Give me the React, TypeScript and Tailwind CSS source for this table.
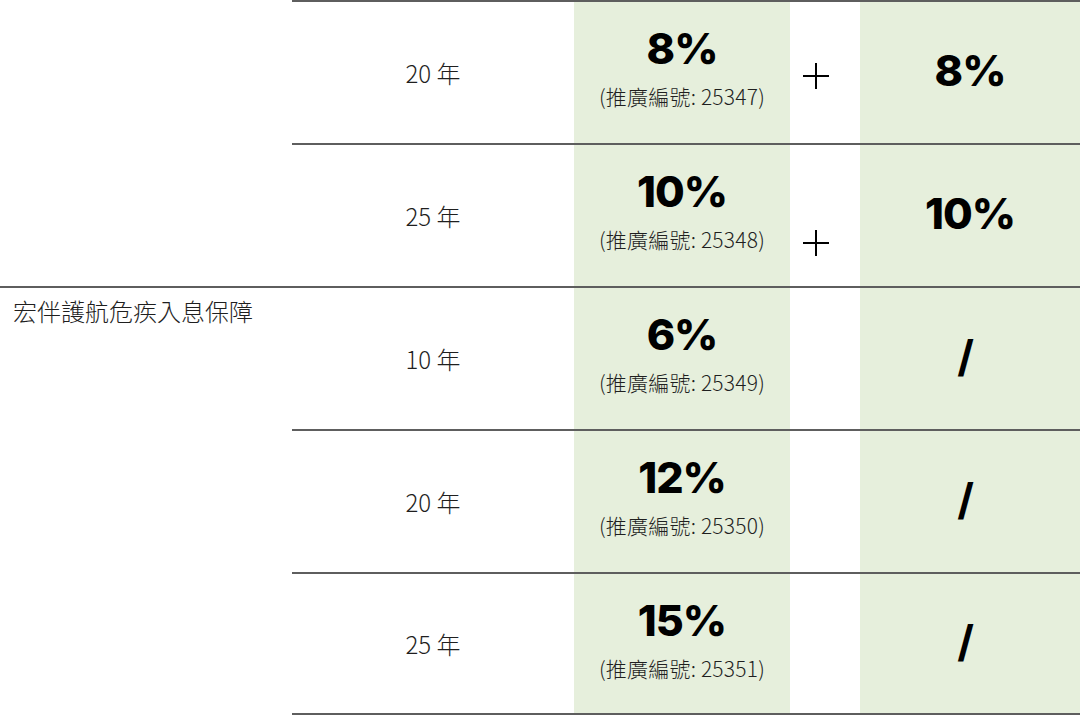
const sans = "font-['Noto_Sans_CJK_TC','Noto_Sans',sans-serif]";

type Row = {
  term: string;
  rate: string;
  code: string;
  plus: "center" | "low" | null;
  extra: string;
};

const rows: Row[] = [
  { term: "20 年", rate: "8%", code: "25347", plus: "center", extra: "8%" },
  { term: "25 年", rate: "10%", code: "25348", plus: "low", extra: "10%" },
  { term: "10 年", rate: "6%", code: "25349", plus: null, extra: "/" },
  { term: "20 年", rate: "12%", code: "25350", plus: null, extra: "/" },
  { term: "25 年", rate: "15%", code: "25351", plus: null, extra: "/" },
];

function Plus() {
  return (
    <svg width="28" height="28" viewBox="0 0 28 28" className="text-black">
      <path d="M14 1v26M1 14h26" stroke="currentColor" strokeWidth="2" fill="none" />
    </svg>
  );
}

export default function App() {
  return (
    <div className={`w-[1080px] h-[716px] bg-white overflow-hidden ${sans}`}>
      <div className="grid grid-cols-[292px_282px_216px_70px_220px] grid-rows-[repeat(5,143px)]">
        {/* empty first column for the rows that belong to the product above */}
        <div className="row-span-2" />
        <div className="row-start-3 row-span-3 border-t-2 border-[#5e5e5e] pt-[6px] pl-[13px] text-[24px] font-light text-[#1f1f1f] leading-[34px]">
          宏伴護航危疾入息保障
        </div>

        {rows.map((r, i) => (
          <div key={i} className="contents">
            <div
              className={`col-start-2 flex items-center justify-center border-t-2 border-[#5e5e5e] text-[24px] font-light text-[#1f1f1f] ${
                i === rows.length - 1 ? "border-b-2" : ""
              }`}
              style={{ gridRowStart: i + 1 }}
            >
              {r.term}
            </div>
            <div
              className={`col-start-3 flex flex-col items-center justify-start pt-[23px] bg-[#e6efdc] border-t-2 border-[#5e5e5e] ${
                i === rows.length - 1 ? "border-b-2" : ""
              }`}
              style={{ gridRowStart: i + 1 }}
            >
              <div className="font-['Inter',sans-serif] font-extrabold text-[43px] leading-[46px] text-black tracking-[-1px]">
                {r.rate}
              </div>
              <div className="text-[21px] font-light leading-[30px] text-[#1f1f1f] mt-[10px] tracking-[0.2px]">
                (推廣編號: {r.code})
              </div>
            </div>
            <div
              className={`col-start-4 flex justify-start pl-[12px] border-t-2 border-[#5e5e5e] ${
                r.plus === "low" ? "items-start pt-[84px]" : "items-center pt-[6px]"
              } ${i === rows.length - 1 ? "border-b-2" : ""}`}
              style={{ gridRowStart: i + 1 }}
            >
              {r.plus && <Plus />}
            </div>
            <div
              className={`col-start-5 flex items-center justify-center pb-[6px] bg-[#e6efdc] border-t-2 border-[#5e5e5e] ${
                i === rows.length - 1 ? "border-b-2" : ""
              }`}
              style={{ gridRowStart: i + 1 }}
            >
              <span
                className={`font-['Inter',sans-serif] text-[43px] leading-[46px] text-black tracking-[-1px] ${
                  r.extra === "/" ? "font-bold pr-[10px]" : "font-extrabold"
                }`}
              >
                {r.extra}
              </span>
            </div>
          </div>
        ))}
      </div>
    </div>
  );
}
